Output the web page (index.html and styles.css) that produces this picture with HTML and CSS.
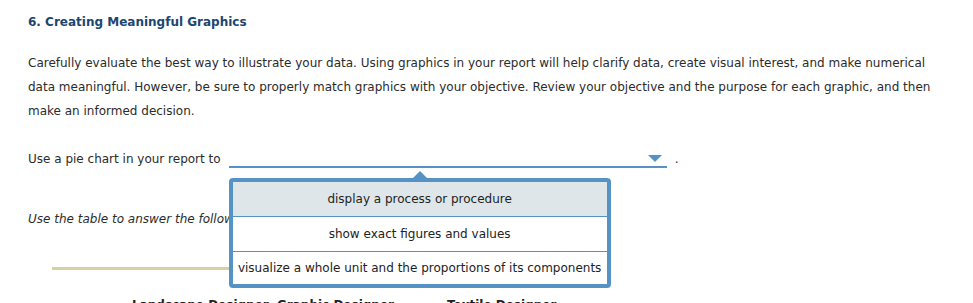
FILE: index.html
```html
<!DOCTYPE html>
<html lang="en">
<head>
    <meta charset="UTF-8">
    <meta name="viewport" content="width=device-width, initial-scale=1.0">
    <title>Creating Meaningful Graphics</title>
    <link rel="stylesheet" href="styles.css">
</head>
<body>

    <div class="question">
        <h2 class="question-title">6. Creating Meaningful Graphics</h2>

        <p class="intro">Carefully evaluate the best way to illustrate your data. Using graphics in your report will help clarify data, create visual interest, and make numerical data meaningful. However, be sure to properly match graphics with your objective. Review your objective and the purpose for each graphic, and then make an informed decision.</p>

        <!-- Frase con la lista desplegable -->
        <div class="fill-row">
            <span class="fill-text">Use a pie chart in your report to</span>
            <div class="dropdown">
                <svg class="dropdown-arrow" width="14" height="7" viewBox="0 0 14 7">
                    <path d="M0 0 H14 L7 7 Z" fill="#5592c6"/>
                </svg>

                <div class="dropdown-menu">
                    <span class="caret"></span>
                    <div class="option selected">display a process or procedure</div>
                    <div class="option">show exact figures and values</div>
                    <div class="option">visualize a whole unit and the proportions of its components</div>
                </div>
            </div>
            <span class="fill-text">.</span>
        </div>

        <p class="note">Use the table to answer the following question.</p>

        <!-- Tabla -->
        <div class="table">
            <div class="table-head">
                <span></span>
                <span>Landscape Designer</span>
                <span>Graphic Designer</span>
                <span>Textile Designer</span>
            </div>
        </div>
    </div>

</body>
</html>
```

FILE: styles.css
```css
body {
    margin: 0;
    padding: 0;
    font-family: "DejaVu Sans", Verdana, sans-serif;
    font-size: 12px;
    color: #2b2b2b;
    background-color: #fff;
}

.question {
    padding: 12px 28px 0 28px;
}

.question-title {
    margin: 0;
    font-size: 12px;
    line-height: 20px;
    font-weight: bold;
    color: #1c4670;
}

.intro {
    margin: 19px 0 0 0;
    line-height: 24px;
}

.fill-row {
    display: flex;
    align-items: flex-end;
    margin-top: 24px;
    height: 24px;
}

.fill-text {
    line-height: 24px;
}

.dropdown {
    position: relative;
    display: flex;
    justify-content: flex-end;
    align-items: flex-end;
    box-sizing: border-box;
    width: 438px;
    height: 20px;
    margin: 0 8px 3px 8px;
    padding: 0 5px 4px 0;
    border-bottom: 2px solid #5592c6;
}

.dropdown-arrow {
    display: block;
}

.dropdown-menu {
    position: absolute;
    top: 30px;
    left: 0;
    width: 382px;
    box-sizing: border-box;
    border: 4px solid #5592c6;
    border-radius: 4px;
    background-color: #fff;
    z-index: 2;
}

.caret {
    position: absolute;
    top: -11px;
    left: 50%;
    margin-left: -7px;
    width: 0;
    height: 0;
    border-left: 7px solid transparent;
    border-right: 7px solid transparent;
    border-bottom: 7px solid #5592c6;
}

.option {
    height: 34px;
    line-height: 34px;
    text-align: center;
    white-space: nowrap;
    color: #222;
    border-bottom: 1px solid #5592c6;
}

.option:last-child {
    border-bottom: none;
    height: 32px;
    line-height: 32px;
}

.option.selected {
    background-color: #dfe6ea;
}

.note {
    margin: 36px 0 0 0;
    line-height: 24px;
    font-style: italic;
}

.table {
    margin: 36px 0 0 24px;
    width: 548px;
    border-top: 3px solid #d9cfa0;
}

.table-head {
    display: grid;
    grid-template-columns: 80px 145px 170px 1fr;
    padding-top: 25px;
    line-height: 20px;
    font-weight: bold;
    color: #222;
    white-space: nowrap;
}
```
